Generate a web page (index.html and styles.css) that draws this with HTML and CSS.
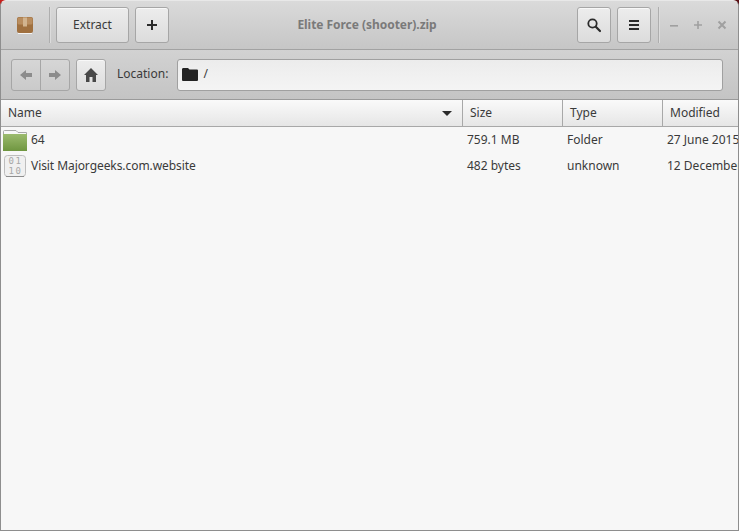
FILE: index.html
```html
<!DOCTYPE html>
<html lang="en">
<head>
<meta charset="utf-8">
<title>Elite Force (shooter).zip</title>
<link rel="stylesheet" href="styles.css">
</head>
<body>
<div class="window">
  <header class="titlebar">
    <svg class="app-icon" width="16" height="17" viewBox="0 0 16 17">
      <rect x="0" y="0" width="16" height="16" rx="2" fill="#a0703f"/>
      <rect x="0.5" y="0.5" width="15" height="7" rx="1.5" fill="#b98d5f"/>
      <rect x="6" y="0.500" width="4" height="9" fill="#d2b48f"/>
      <rect x="1" y="16" width="14" height="1" fill="#f4f4f4"/>
    </svg>
    <span class="sep sep-left"></span>
    <button class="btn btn-extract">Extract</button>
    <button class="btn btn-icon btn-add">
      <svg width="12" height="12" viewBox="0 0 12 12"><path d="M5 1h2v4h4v2H7v4H5V7H1V5h4z" fill="#2b2b2b"/></svg>
    </button>
    <div class="title">Elite Force (shooter).zip</div>
    <button class="btn btn-icon">
      <svg width="16" height="16" viewBox="0 0 16 16"><circle cx="6.5" cy="6.5" r="4.2" fill="none" stroke="#2b2b2b" stroke-width="1.8"/><path d="M9.8 9.8 14 14" stroke="#2b2b2b" stroke-width="2.2" stroke-linecap="round"/></svg>
    </button>
    <button class="btn btn-icon btn-menu">
      <svg width="12" height="12" viewBox="0 0 12 12"><path d="M1 1h10v2H1zM1 5h10v2H1zM1 9h10v2H1z" fill="#2b2b2b"/></svg>
    </button>
    <span class="sep sep-right"></span>
    <div class="wm">
      <svg width="10" height="10" viewBox="0 0 10 10"><rect x="1" y="5" width="8" height="1.6" fill="#a0a0a0"/></svg>
      <svg width="10" height="10" viewBox="0 0 10 10"><path d="M4.2 1h1.6v3.2H9v1.6H5.8V9H4.2V5.8H1V4.2h3.2z" fill="#a0a0a0"/></svg>
      <svg width="10" height="10" viewBox="0 0 10 10"><path d="M1.5 1.5 8.5 8.5M8.5 1.5 1.5 8.5" stroke="#a0a0a0" stroke-width="2"/></svg>
    </div>
  </header>

  <nav class="toolbar">
    <div class="nav-group">
      <span class="nav-btn">
        <svg width="12" height="10" viewBox="0 0 12 10"><path d="M0 5 6 0v3h6v4H6v3z" fill="#8c8c8c"/></svg>
      </span>
      <span class="nav-btn nav-next">
        <svg width="12" height="10" viewBox="0 0 12 10"><path d="M12 5 6 0v3H0v4h6v3z" fill="#8c8c8c"/></svg>
      </span>
    </div>
    <button class="btn btn-home">
      <svg width="14" height="14" viewBox="0 0 14 14"><path d="M7 0 14 7h-2v7H8.500V9h-3v5H2V7H0z" fill="#484848"/></svg>
    </button>
    <label class="loc-label">Location:</label>
    <div class="entry">
      <svg width="16" height="13" viewBox="0 0 16 13"><path d="M0 1.500Q0 0 1 0h5l1.500 1.500H15q1 0 1 1V12q0 1-1 1H1q-1 0-1-1z" fill="#232323"/></svg>
      <span class="entry-text">/</span>
    </div>
  </nav>

  <div class="header-row">
    <div class="col col-name">Name<svg class="sort" width="10" height="5" viewBox="0 0 10 5"><path d="M0 0h10L5 5z" fill="#2b2b2b"/></svg></div>
    <div class="col col-size">Size</div>
    <div class="col col-type">Type</div>
    <div class="col col-mod">Modified</div>
  </div>

  <main class="list">
    <div class="row">
      <div class="cell cell-name">
        <svg class="file-icon" width="24" height="21" viewBox="0 0 24 21">
          <path d="M0.500 20V1.500Q0.500 0.500 1.500 0.500H13l2 2H23.500V20z" fill="#f8f8f8" stroke="#a8a8a8"/>
          <defs><linearGradient id="fg" x1="0" y1="0" x2="0" y2="1"><stop offset="0" stop-color="#9cbb6e"/><stop offset="1" stop-color="#6f9640"/></linearGradient></defs>
          <rect x="0" y="4" width="24" height="17" fill="url(#fg)"/>
        </svg>
        <span class="name-text">64</span>
      </div>
      <div class="cell cell-size">759.1 MB</div>
      <div class="cell cell-type">Folder</div>
      <div class="cell cell-mod">27 June 2015</div>
    </div>
    <div class="row">
      <div class="cell cell-name">
        <svg class="file-icon" width="24" height="22" viewBox="0 0 24 22">
          <rect x="1.500" y="0.500" width="21" height="21" rx="3" fill="#f0f0f0" stroke="#bdbdbd"/>
          <path d="M3 21.500H21" stroke="#8e8e8e"/>
          <text class="bin" x="12.500" y="9" text-anchor="middle">01</text>
          <text class="bin" x="12.500" y="19" text-anchor="middle">10</text>
        </svg>
        <span class="name-text">Visit Majorgeeks.com.website</span>
      </div>
      <div class="cell cell-size">482 bytes</div>
      <div class="cell cell-type">unknown</div>
      <div class="cell cell-mod">12 December 2014</div>
    </div>
  </main>
</div>
</body>
</html>
```

FILE: styles.css
```css
* { box-sizing: border-box; }
html, body { height: 100%; }
body {
  margin: 0;
  overflow: hidden;
  background: linear-gradient(90deg, #c8201c, #5a0f14);
  font-family: "Noto Sans", sans-serif;
  font-size: 12px;
  color: #3a3a3a;
}
.window {
  height: 531px;
  display: flex;
  flex-direction: column;
  background: #f7f7f7;
  border: 1px solid #8e8e8e;
  border-top-color: #e8e8e8;
  border-radius: 6px 6px 0 0;
  overflow: hidden;
}
button { font: inherit; color: inherit; padding: 0; margin: 0; }
.titlebar {
  height: 49px;
  flex: none;
  display: flex;
  align-items: center;
  padding: 0 11px 0 16px;
  background: linear-gradient(#dadada, #c6c6c6);
  border-bottom: 1px solid #a2a2a2;
}
.app-icon { flex: none; }
.sep { width: 1px; height: 36px; background: #aeaeae; box-shadow: 1px 0 0 #dcdcdc; flex: none; }
.sep-left { margin: 0 6px 0 16px; }
.sep-right { margin: 0 10px 0 7px; }
.btn {
  height: 36px;
  display: inline-flex;
  align-items: center;
  justify-content: center;
  border: 1px solid #a6a6a6;
  border-radius: 3px;
  background: linear-gradient(#ededed, #dcdcdc);
  box-shadow: inset 0 1px 0 #f8f8f8;
  flex: none;
}
.btn-extract { width: 73px; font-size: 12px; color: #3a3a3a; padding-bottom: 2px; }
.btn-icon { width: 34px; }
.btn-add { margin-left: 6px; }
.btn-menu { margin-left: 6px; }
.title {
  flex: 1;
  text-align: center;
  font-weight: 700;
  color: #7a7a7a;
  font-size: 12px;
  letter-spacing: -0.04px;
  padding: 0 12px 2px 0;
}
.wm { display: flex; gap: 14px; align-items: center; }
.toolbar {
  height: 50px;
  flex: none;
  display: flex;
  align-items: center;
  padding: 0 15px 0 10px;
  background: linear-gradient(#d2d2d2, #c4c4c4);
  border-bottom: 1px solid #9a9a9a;
}
.nav-group {
  width: 59px;
  height: 32px;
  display: flex;
  border: 1px solid #a6a6a6;
  border-radius: 3px;
  background: linear-gradient(#d6d6d6, #cacaca);
  flex: none;
}
.nav-btn { flex: 1; display: flex; align-items: center; justify-content: center; }
.nav-next { border-left: 1px solid #a6a6a6; }
.btn-home { width: 30px; height: 32px; margin-left: 6px; }
.loc-label { margin: 0 9px 0 11px; color: #3a3a3a; white-space: nowrap; padding-bottom: 2px; }
.entry {
  flex: 1;
  height: 32px;
  display: flex;
  align-items: center;
  gap: 5px;
  padding-left: 4px;
  border: 1px solid #a0a0a0;
  border-radius: 3px;
  background: linear-gradient(#ececec, #f4f4f4);
}
.entry-text { color: #3a3a3a; padding-bottom: 2px; }
.header-row {
  height: 27px;
  flex: none;
  display: flex;
  background: linear-gradient(#fafafa, #e6e6e6);
  border-bottom: 1px solid #a8a8a8;
}
.col { display: flex; align-items: center; padding: 0 0 2px 7px; border-right: 1px solid #a8a8a8; flex: none; width: 100px; }
.col-name { width: 462px; justify-content: space-between; padding-right: 10px; }
.col-mod { border-right: 0; width: 76px; }
.sort { flex: none; margin-top: 2px; }
.list { flex: 1; overflow: hidden; }
.row { display: flex; height: 26px; align-items: center; white-space: nowrap; }
.cell { flex: none; width: 100px; overflow: hidden; padding: 0 0 2px 4px; }
.cell-name { width: 462px; display: flex; align-items: center; gap: 4px; padding: 0 0 0 2px; }
.name-text { padding-bottom: 2px; letter-spacing: -0.07px; }
.cell-mod { width: 76px; }
.file-icon { flex: none; }
.bin { font-family: "DejaVu Sans Mono", monospace; font-size: 9px; letter-spacing: 1.5px; fill: #a8a8a8; }
```
